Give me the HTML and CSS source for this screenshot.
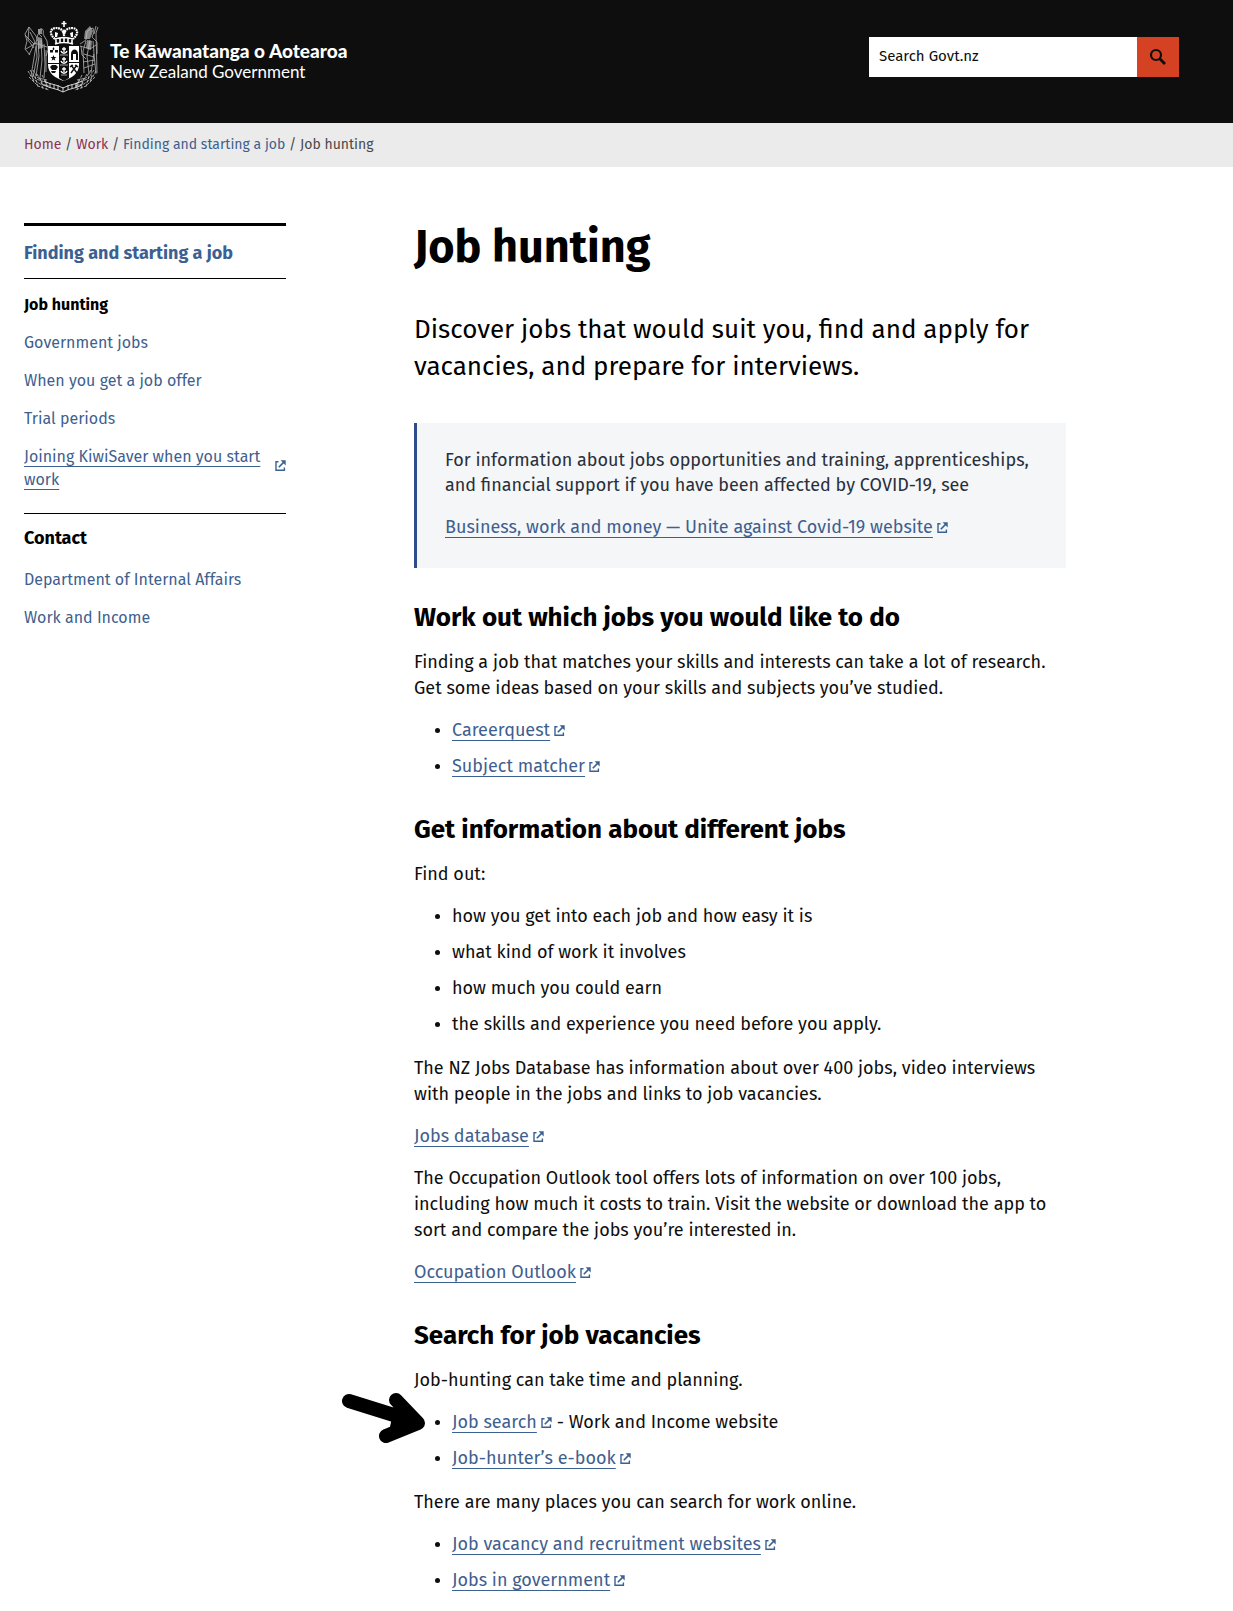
FILE: index.html
```html
<!DOCTYPE html>
<html lang="en-NZ">
<head>
<meta charset="utf-8">
<meta name="viewport" content="width=device-width, initial-scale=1">
<title>Job hunting | New Zealand Government</title>
<link rel="stylesheet" href="styles.css">
</head>
<body>
<svg class="sprite" aria-hidden="true">
  <symbol id="external" viewBox="0 0 11 11">
    <path d="M3.5 1.8H1v8.400h8.400V7.600" fill="none" stroke="currentColor" stroke-width="1.400"/>
    <path d="M3.800 7.200 8.600 2.400" fill="none" stroke="currentColor" stroke-width="1.600"/>
    <path d="M5.600 .3h5.100v5.100z" fill="currentColor"/>
  </symbol>
</svg>

<header class="site-header">
  <a class="brand" href="#">
    <svg class="arms" viewBox="0 0 76 74" aria-hidden="true">
      <g fill="none" stroke="#b4b4b4" stroke-width=".8">
        <path d="M5 7 1 14l2 7-2 8 5 6M5 7l7 9 3 8M5 7l-1 13 6 8M1 15l9 9M2 29l10-6M6 12l5 10-6 13"/>
        <path d="M16 9c3-1 4 2 3 5l4 7 1 9-2 6M14 14l-2 9 1 14-4 20M14 22l1 14-3 20M17 20l1 20-2 18M20 24l1 20-1 14M12 26l-5 30M22 30v22M15 9v5l3 3M10 23l13 4"/>
        <path d="M66 9l-3 3-1 8-6 4M66 9l3-1 1 4-2 5 5 5v12M72 6l-2 8M74 7l-2 6 1 40M62 21l-3 10 1 22M66 20l-3 16 2 18M69 21l1 12-3 20M56 26l10 3 6-4M60 34l10 3M59 42l12-2M60 48l11-4M57 26l1 9 4 4M70 34l2 20"/>
      </g>
      <g fill="none" stroke="#c4c4c4" stroke-width=".8" stroke-dasharray="3 1">
        <path d="M4 51l4 7 8 6 9 2M6 50l6 9 12 4M5 57l9 9 11 4M9 50l5 8 9 2M11 56l3 11M16 58l3 11M21 60l2 10M8 55l2 8M13 54l7 12M18 55l6 12"/>
        <path d="M72 51l-4 7-8 6-9 2M70 50l-6 9-12 4M71 57l-9 9-11 4M67 50l-5 8-9 2M65 56l-3 11M60 58l-3 11M55 60l-2 10M68 55l-2 8M63 54l-7 12M58 55l-6 12"/>
      </g>
      <g fill="none" stroke="#e4e4e4" stroke-width=".9">
        <path d="M20 61c7 4 12 3 19 7 7-4 12-3 19-7M20 65c7 4 12 3 19 7 7-4 12-3 19-7M26 63v5M30 64v5M34 65v5M39 67v5M44 65v5M48 64v5M52 63v5"/>
      </g>
      <path d="M14 9h4v5h-4zM61 11l5-5 3 5-3 8h-6zM14 17l4 1 1 10-5 1zM63 20l5 1-1 9-5-2z" fill="#bbb" opacity=".7"/>
      <path d="M24 26h31v19c0 8-7 13-15.500 16C31 58 24 53 24 45z" fill="#fff"/>
      <path d="M35 26h10v32l-5 3-5-3z" fill="#0e0e0e"/>
      <g fill="none" stroke="#fff" stroke-width="1.300">
        <path d="M37 31c1 3 5 3 6 0M40 27v5M38 29h4M37 41c1 3 5 3 6 0M40 37v5M38 39h4M37 51c1 3 5 3 6 0M40 47v5M38 49h4"/>
        <path d="M36 35h8M36 45h8M37 55h6" stroke-width=".6"/>
      </g>
      <g fill="#0e0e0e">
        <path d="M29.500 35l.8 2.100h2.200l-1.800 1.400.7 2.200-1.900-1.300-1.900 1.300.7-2.200-1.800-1.400h2.200zM29.500 27l1 2-1 1.500-1-1.500zM26 30h3v2.500h-3zM31 30h3v2.500h-3zM26 47l2-2h4l2 2-2 3h-4zM27 51h5l-1 2h-3zM47 40v-6c0-6 7-6 7 0v6h-2v-6h-3v6z"/>
        <path d="M24 43h11v1H24zM45 42h10v1H45z"/>
      </g>
      <path d="M47 45l6 8M53 45l-6 8M46 47l3-2M51 45l3 2" stroke="#0e0e0e" stroke-width="1.400" fill="none"/>
      <g fill="none" stroke="#fff" stroke-width="1.600">
        <path d="M40 1v6M37.500 3.500h5"/>
        <path d="M31 19C24 13 27 8 32 8c4 0 8 2 8 8 0-6 4-8 8-8 5 0 8 5 1 11" stroke-dasharray="1.800 .7" stroke-width="2.200"/>
        <path d="M31 19c6-2 12-2 18 0M31 24c6-2 12-2 18 0M32 19v5M48 19v5M36 18v5M40 18v5M44 18v5"/>
      </g>
      <path d="M40 9l2 3-2 3-2-3zM31 12l3 1-1 4h-2zM49 12l-3 1 1 4h2z" fill="#fff"/>
    </svg>
    <span class="brand-text">
      <span class="brand-maori" lang="mi">Te Kāwanatanga o Aotearoa</span>
      <span class="brand-english">New Zealand Government</span>
    </span>
  </a>
  <form class="search" role="search">
    <input class="search-box" type="search" placeholder="Search Govt.nz" aria-label="Search Govt.nz">
    <button class="search-button" type="submit" aria-label="Search">
      <svg class="search-icon" viewBox="0 0 18 18" aria-hidden="true">
        <circle cx="7" cy="7" r="5" fill="none" stroke="currentColor" stroke-width="2.200"/>
        <path d="M10.500 10.500l5.500 5.500" stroke="currentColor" stroke-width="2.800"/>
      </svg>
    </button>
  </form>
</header>

<nav class="breadcrumb" aria-label="Breadcrumb">
  <a class="visited" href="#">Home</a> / <a class="visited" href="#">Work</a> / <a href="#">Finding and starting a job</a> / <span>Job hunting</span>
</nav>

<div class="page">
  <aside class="sidebar">
    <nav aria-label="Section">
      <h2 class="side-title"><a href="#">Finding and starting a job</a></h2>
      <ul class="side-list">
        <li class="current">Job hunting</li>
        <li><a href="#">Government jobs</a></li>
        <li><a href="#">When you get a job offer</a></li>
        <li><a href="#">Trial periods</a></li>
        <li><a class="side-external" href="#"><span class="link-text">Joining KiwiSaver when you start work</span><svg class="icon"><use href="#external"/></svg></a></li>
      </ul>
    </nav>
    <section class="contact">
      <h2 class="contact-title">Contact</h2>
      <ul class="side-list">
        <li><a href="#">Department of Internal Affairs</a></li>
        <li><a href="#">Work and Income</a></li>
      </ul>
    </section>
  </aside>

  <main class="content">
    <h1>Job hunting</h1>
    <p class="lead">Discover jobs that would suit you, find and apply for vacancies, and prepare for interviews.</p>

    <div class="notice">
      <p>For information about jobs opportunities and training, apprenticeships, and financial support if you have been affected by COVID-19, see</p>
      <p><a href="#"><span class="link-text">Business, work and money — Unite against Covid-19 website</span><svg class="icon"><use href="#external"/></svg></a></p>
    </div>

    <h2>Work out which jobs you would like to do</h2>
    <p>Finding a job that matches your skills and interests can take a lot of research. Get some ideas based on your skills and subjects you’ve studied.</p>
    <ul>
      <li><a href="#"><span class="link-text">Careerquest</span><svg class="icon"><use href="#external"/></svg></a></li>
      <li><a href="#"><span class="link-text">Subject matcher</span><svg class="icon"><use href="#external"/></svg></a></li>
    </ul>

    <h2>Get information about different jobs</h2>
    <p>Find out:</p>
    <ul>
      <li>how you get into each job and how easy it is</li>
      <li>what kind of work it involves</li>
      <li>how much you could earn</li>
      <li>the skills and experience you need before you apply.</li>
    </ul>
    <p>The NZ Jobs Database has information about over 400 jobs, video interviews with people in the jobs and links to job vacancies.</p>
    <p><a href="#"><span class="link-text">Jobs database</span><svg class="icon"><use href="#external"/></svg></a></p>
    <p>The Occupation Outlook tool offers lots of information on over 100 jobs, including how much it costs to train. Visit the website or download the app to sort and compare the jobs you’re interested in.</p>
    <p><a href="#"><span class="link-text">Occupation Outlook</span><svg class="icon"><use href="#external"/></svg></a></p>

    <h2>Search for job vacancies</h2>
    <p>Job-hunting can take time and planning.</p>
    <ul>
      <li class="pointed">
        <svg class="pointer" viewBox="0 0 86 54" aria-hidden="true"><path d="M8 9 56 24M55 8 77 31 45 44" fill="none" stroke="#000" stroke-width="14" stroke-linecap="round" stroke-linejoin="round"/><path d="M54 10 78 31 48 40z"/></svg>
        <a href="#"><span class="link-text">Job search</span><svg class="icon"><use href="#external"/></svg></a> - Work and Income website</li>
      <li><a href="#"><span class="link-text">Job-hunter’s e-book</span><svg class="icon"><use href="#external"/></svg></a></li>
    </ul>
    <p>There are many places you can search for work online.</p>
    <ul>
      <li><a href="#"><span class="link-text">Job vacancy and recruitment websites</span><svg class="icon"><use href="#external"/></svg></a></li>
      <li><a href="#"><span class="link-text">Jobs in government</span><svg class="icon"><use href="#external"/></svg></a></li>
    </ul>
  </main>
</div>
</body>
</html>
```
FILE: styles.css
```css
* { box-sizing: border-box; }

body {
  margin: 0;
  background: #fff;
  color: #0e0e0e;
  font: 18px/26px "Fira Sans", "Noto Sans", sans-serif;
}

a { color: #3f5f8f; text-decoration: none; }
ul { margin: 0; padding: 0; }
.sprite { display: none; }

.icon { width: 11px; height: 11px; margin-left: 4px; color: #3b6192; }
.link-text {
  text-decoration: underline 1px #3b6192;
  text-decoration-skip-ink: none;
  text-underline-offset: 4px;
}

.site-header {
  display: flex;
  justify-content: space-between;
  align-items: flex-start;
  padding: 20px 54px 29px 24px;
  background: #0e0e0e;
}

.brand { display: flex; align-items: center; gap: 10px; color: #fff; }
.arms { width: 76px; height: 74px; }
.brand-text { display: flex; flex-direction: column; padding-top: 7px; font: 17px/21px Lato, sans-serif; }
.brand-maori { font-size: 19px; font-weight: 900; }

.search { display: flex; width: 310px; margin-top: 17px; }
.search-box {
  flex: 1;
  min-width: 0;
  height: 40px;
  border: 0;
  border-radius: 0;
  padding: 0 10px 2px;
  background: #fff;
  font: inherit;
  font-size: 15px;
}
.search-box::placeholder { color: #0e0e0e; opacity: 1; }
.search-button {
  display: flex;
  align-items: center;
  justify-content: center;
  width: 42px;
  height: 40px;
  border: 0;
  padding: 0;
  background: #d54223;
  color: #0e0e0e;
}
.search-icon { width: 18px; height: 18px; }

.breadcrumb {
  padding: 9px 24px;
  background: #ebebeb;
  color: #4a4a4a;
  font-size: 14px;
}
.breadcrumb .visited { color: #8b3550; }

.page { display: flex; padding: 56px 24px 18px; }

.sidebar { flex: 0 0 262px; margin-right: 128px; font-size: 16px; line-height: 23px; }
.side-title {
  margin: 0 0 14px;
  border-top: 3px solid #000;
  border-bottom: 1px solid #000;
  padding: 16px 0 13px;
  font-size: 18px;
  line-height: 23px;
}
.side-title a { color: #3b6192; }
.side-list { display: flex; flex-direction: column; gap: 15px; list-style: none; }
.current { color: #000; font-weight: 700; }
.side-external { display: flex; align-items: center; justify-content: space-between; }
.side-external .icon { flex: none; margin-bottom: 6px; }

.contact { margin-top: 22px; border-top: 1px solid #000; padding-top: 13px; }
.contact-title { margin: 0 0 18px; color: #000; font-size: 18px; line-height: 23px; }

.content { flex: 0 1 652px; min-width: 0; }
h1 { margin: 0; color: #000; font-size: 45px; line-height: 48px; }

.notice {
  border-left: 3px solid #2f4b8c;
  padding: 25px 28px 11px;
  background: #f4f6f8;
  color: #2a2f3a;
}

.content h2 { margin: 34px 0 14px; color: #000; font-size: 26px; line-height: 34px; }
.content p { margin: 0 0 16px; }
.content .lead { margin: 40px 0 38px; color: #000; font-size: 26px; line-height: 37px; }
.content .notice p { margin-bottom: 17px; line-height: 25px; }
.content .notice + h2 { margin-top: 33px; }
.content ul { display: flex; flex-direction: column; gap: 10px; margin-bottom: 18px; padding-left: 38px; }
.content li::marker { font-size: 16px; }

.pointed { position: relative; }
.pointer { position: absolute; left: -111px; top: -17px; width: 86px; height: 54px; }
```
